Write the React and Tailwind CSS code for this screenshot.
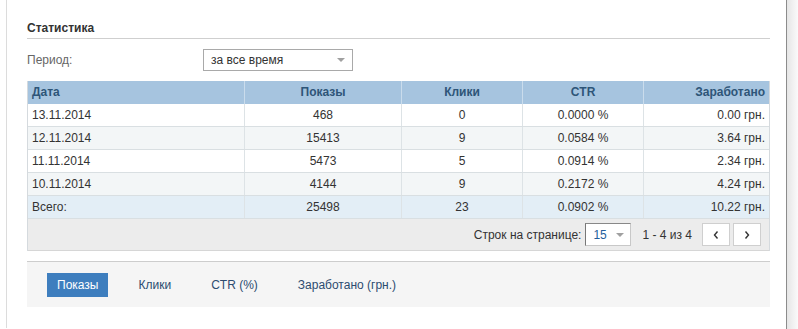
import React from "react";

const rows = [
  ["13.11.2014", "468", "0", "0.0000 %", "0.00 грн."],
  ["12.11.2014", "15413", "9", "0.0584 %", "3.64 грн."],
  ["11.11.2014", "5473", "5", "0.0914 %", "2.34 грн."],
  ["10.11.2014", "4144", "9", "0.2172 %", "4.24 грн."],
];

const align = ["text-left", "text-center", "text-center", "text-center", "text-right"];

function Row({ cells, bg }) {
  return (
    <div className={`grid grid-cols-[217px_157px_121px_121px_125px] h-[23px] border-b border-[#d9dfe2] ${bg}`}>
      {cells.map((c, i) => (
        <div
          key={i}
          className={`${align[i]} px-[4px] leading-[22px] ${i < 4 ? "border-r border-[#dde3e6]" : ""}`}
        >
          {c}
        </div>
      ))}
    </div>
  );
}

export default function App() {
  return (
    <div
      className="flex w-[798px] h-[329px] bg-white text-[12px] text-[#333]"
      style={{ fontFamily: '"Liberation Sans", Arial, sans-serif' }}
    >
      <div className="ml-[6px] w-[780px] h-[328px] border-l border-[#dcdcdc] pl-[20px] pr-[16px]">
        {/* Title */}
        <div className="pt-[21px] pb-[3px] leading-[14px] font-bold text-[#333] border-b border-[#cfcfcf]">
          Статистика
        </div>

        {/* Period */}
        <div className="flex items-center mt-[10px] h-[22px]">
          <div className="w-[176px] text-[#666]">Период:</div>
          <div className="relative w-[150px] h-[22px] border border-[#a9a9a9] bg-white flex items-center pl-[7px]">
            <span>за все время</span>
            <span className="absolute right-[7px] top-[8px] w-0 h-0 border-l-[4px] border-r-[4px] border-t-[4px] border-l-transparent border-r-transparent border-t-[#a0a0a0]" />
          </div>
        </div>

        {/* Table */}
        <div className="mt-[10px] border-l border-r border-[#d5dade]">
          <div className="grid grid-cols-[217px_157px_121px_121px_125px] h-[23px] bg-[#a6c4df] font-bold text-[#2e5578]">
            {["Дата", "Показы", "Клики", "CTR", "Заработано"].map((h, i) => (
              <div
                key={h}
                className={`${align[i]} px-[4px] leading-[23px] ${i < 4 ? "border-r border-[#cadcec]" : ""}`}
              >
                {h}
              </div>
            ))}
          </div>
          {rows.map((r, i) => (
            <Row key={i} cells={r} bg={i % 2 === 0 ? "bg-white" : "bg-[#f3f6f7]"} />
          ))}
          <Row cells={["Всего:", "25498", "23", "0.0902 %", "10.22 грн."]} bg="bg-[#e3eef6]" />

          {/* Pager */}
          <div className="h-[32px] bg-[#ececec] border-b border-[#d6d6d6] flex items-center justify-end pr-[8px]">
            <span className="text-[#333]">Строк на странице:</span>
            <div className="relative ml-[4px] w-[46px] h-[23px] bg-white border border-[#c8c8c8] border-l-[#777] border-t-[#888] flex items-center pl-[7px] text-[#245e9c]">
              15
              <span className="absolute right-[6px] top-[9px] w-0 h-0 border-l-[4px] border-r-[4px] border-t-[4px] border-l-transparent border-r-transparent border-t-[#a0a0a0]" />
            </div>
            <span className="ml-[11px] text-[#333]">1 - 4 из 4</span>
            <div className="ml-[10px] w-[28px] h-[23px] bg-white border border-[#cfcfcf] flex items-center justify-center">
              <svg width="8" height="10" viewBox="0 0 8 10">
                <path d="M5.5 1.5 L2.5 5 L5.5 8.5" fill="none" stroke="#333" strokeWidth="1.4" />
              </svg>
            </div>
            <div className="ml-[3px] w-[28px] h-[23px] bg-white border border-[#cfcfcf] flex items-center justify-center">
              <svg width="8" height="10" viewBox="0 0 8 10">
                <path d="M2.5 1.5 L5.5 5 L2.5 8.5" fill="none" stroke="#333" strokeWidth="1.4" />
              </svg>
            </div>
          </div>
        </div>

        {/* Tabs */}
        <div className="mt-[10px] h-[46px] border-t border-[#cdcdcd] bg-[#f5f5f5] flex items-center pl-[20px] gap-[20px] text-[#2c4c70]">
          <div className="h-[24px] px-[10px] flex items-center bg-[#3e7ebe] text-white">Показы</div>
          <div className="h-[24px] px-[10px] flex items-center">Клики</div>
          <div className="h-[24px] px-[10px] flex items-center">CTR (%)</div>
          <div className="h-[24px] px-[10px] flex items-center">Заработано (грн.)</div>
        </div>
      </div>
      <div className="w-[1px] h-full bg-[#8c8c8c]" />
      <div className="flex-1 h-full bg-gradient-to-r from-[#e6e6e6] to-[#fafafa]" />
    </div>
  );
}
